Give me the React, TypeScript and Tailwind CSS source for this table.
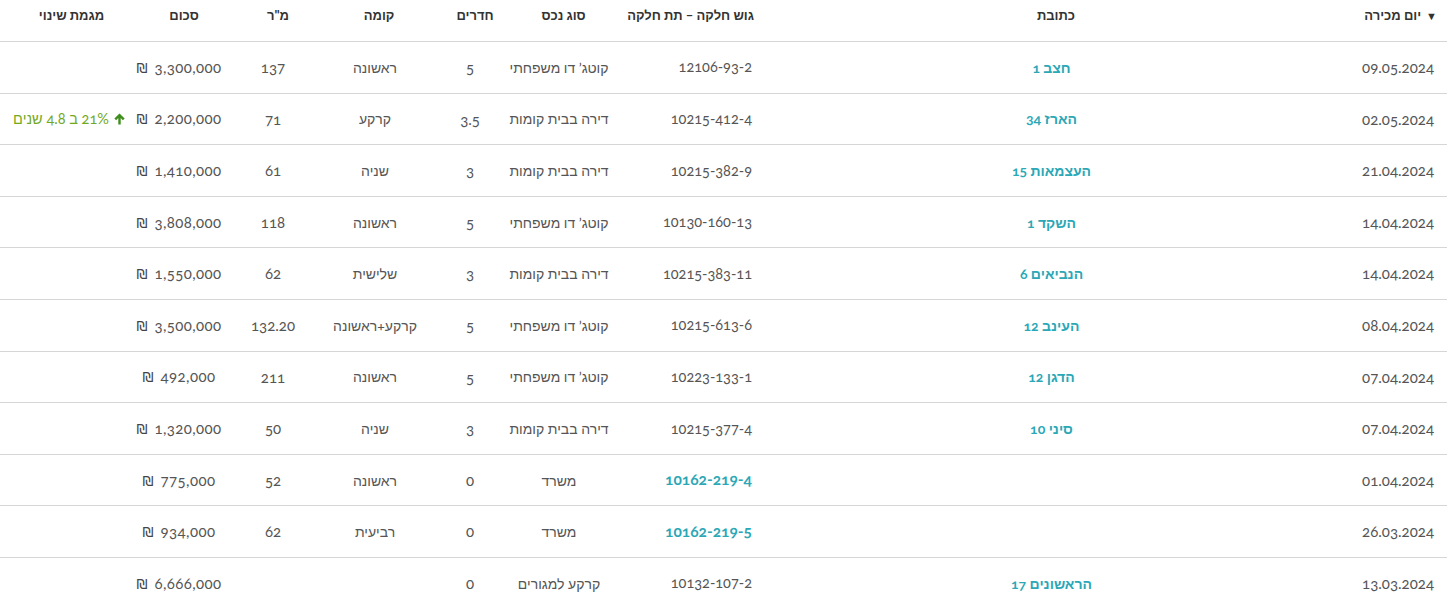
import React from "react";

type Row = {
  date: string;
  addr: string;
  gush: string;
  gushLink?: boolean;
  type: string;
  rooms: string;
  floor: string;
  sqm: string;
  price: string;
  trend?: string;
};

const rows: Row[] = [
  { date: "09.05.2024", addr: "חצב 1", gush: "12106-93-2", type: "קוטג’ דו משפחתי", rooms: "5", floor: "ראשונה", sqm: "137", price: "3,300,000" },
  { date: "02.05.2024", addr: "הארז 34", gush: "10215-412-4", type: "דירה בבית קומות", rooms: "3.5", floor: "קרקע", sqm: "71", price: "2,200,000", trend: "21% ב 4.8 שנים" },
  { date: "21.04.2024", addr: "העצמאות 15", gush: "10215-382-9", type: "דירה בבית קומות", rooms: "3", floor: "שניה", sqm: "61", price: "1,410,000" },
  { date: "14.04.2024", addr: "השקד 1", gush: "10130-160-13", type: "קוטג’ דו משפחתי", rooms: "5", floor: "ראשונה", sqm: "118", price: "3,808,000" },
  { date: "14.04.2024", addr: "הנביאים 6", gush: "10215-383-11", type: "דירה בבית קומות", rooms: "3", floor: "שלישית", sqm: "62", price: "1,550,000" },
  { date: "08.04.2024", addr: "העינב 12", gush: "10215-613-6", type: "קוטג’ דו משפחתי", rooms: "5", floor: "קרקע+ראשונה", sqm: "132.20", price: "3,500,000" },
  { date: "07.04.2024", addr: "הדגן 12", gush: "10223-133-1", type: "קוטג’ דו משפחתי", rooms: "5", floor: "ראשונה", sqm: "211", price: "492,000" },
  { date: "07.04.2024", addr: "סיני 10", gush: "10215-377-4", type: "דירה בבית קומות", rooms: "3", floor: "שניה", sqm: "50", price: "1,320,000" },
  { date: "01.04.2024", addr: "", gush: "10162-219-4", gushLink: true, type: "משרד", rooms: "0", floor: "ראשונה", sqm: "52", price: "775,000" },
  { date: "26.03.2024", addr: "", gush: "10162-219-5", gushLink: true, type: "משרד", rooms: "0", floor: "רביעית", sqm: "62", price: "934,000" },
  { date: "13.03.2024", addr: "הראשונים 17", gush: "10132-107-2", type: "קרקע למגורים", rooms: "0", floor: "", sqm: "", price: "6,666,000" },
];

const grid = "grid grid-cols-[223px_345px_246px_119px_92px_98px_98px_102px_124px]";

function ArrowUp() {
  return (
    <svg width="11" height="12" viewBox="0 0 11 12" className="shrink-0">
      <path d="M5.5 0.5 L10.6 5.6 L8.9 7.2 L6.7 5 L6.7 11.5 L4.3 11.5 L4.3 5 L2.1 7.2 L0.4 5.6 Z" fill="#3e8e1c" />
    </svg>
  );
}

export default function App() {
  return (
    <div
      dir="rtl"
      className="w-[1447px] bg-white text-[14px] oldstyle-nums text-[#555]"
      style={{ fontFamily: "Lato, 'Liberation Sans', Arial, sans-serif" }}
    >
      <div className={`${grid} h-[42px] border-b border-[#d6d6d6] font-bold text-[13px] text-[#333] pb-[10px]`}>
        <div className="flex items-center justify-start pr-[10px] gap-[5px]">
          <span className="text-[11px] leading-none">▼</span>
          <span>יום מכירה</span>
        </div>
        <div className="flex items-center justify-center pl-[9px]">כתובת</div>
        <div className="flex items-center justify-start pr-[125px] whitespace-nowrap">גוש חלקה – תת חלקה</div>
        <div className="flex items-center justify-center pr-[20px]">סוג נכס</div>
        <div className="flex items-center justify-center pl-[14px]">חדרים</div>
        <div className="flex items-center justify-center pl-[12px]">קומה</div>
        <div className="flex items-center justify-center pl-[6px]">מ"ר</div>
        <div className="flex items-center justify-center pl-[18px]">סכום</div>
        <div className="flex items-center justify-center pl-[19px]">מגמת שינוי</div>
      </div>
      {rows.map((r, i) => (
        <div key={i} className={`${grid} h-[51.6px] border-b border-[#d6d6d6] whitespace-nowrap`}>
          <div className="flex items-center justify-start pr-[13px] text-[15px]">{r.date}</div>
          <div className="flex items-center justify-center">
            {r.addr && <span className="font-bold text-[#2ba7b6]">{r.addr}</span>}
          </div>
          <div className="flex items-center justify-start pr-[127px] text-[14.5px]">
            {r.gushLink ? <span className="font-bold text-[#2ba7b6] text-[15.5px]">{r.gush}</span> : r.gush}
          </div>
          <div className="flex items-center justify-center pr-[29px]">{r.type}</div>
          <div className="flex items-center justify-center pl-[4px] text-[15px]">{r.rooms}</div>
          <div className="flex items-center justify-center pl-[4px]">{r.floor}</div>
          <div className="flex items-center justify-center pr-[4px] text-[15px]">{r.sqm}</div>
          <div className="flex items-center justify-center pl-[8px] text-[15px]">
            <span dir="ltr">
              <span className="text-[14px] text-[#444]" style={{ fontFamily: "'DejaVu Sans', sans-serif" }}>₪</span>
              <span className="ml-[7px] tracking-[0.4px]">{r.price}</span>
            </span>
          </div>
          <div className="flex items-center justify-center pl-[14px]">
            {r.trend && (
              <span className="flex items-center gap-[5px] text-[#72a91e]">
                <ArrowUp />
                <span className="text-[14.5px]">{r.trend}</span>
              </span>
            )}
          </div>
        </div>
      ))}
    </div>
  );
}
